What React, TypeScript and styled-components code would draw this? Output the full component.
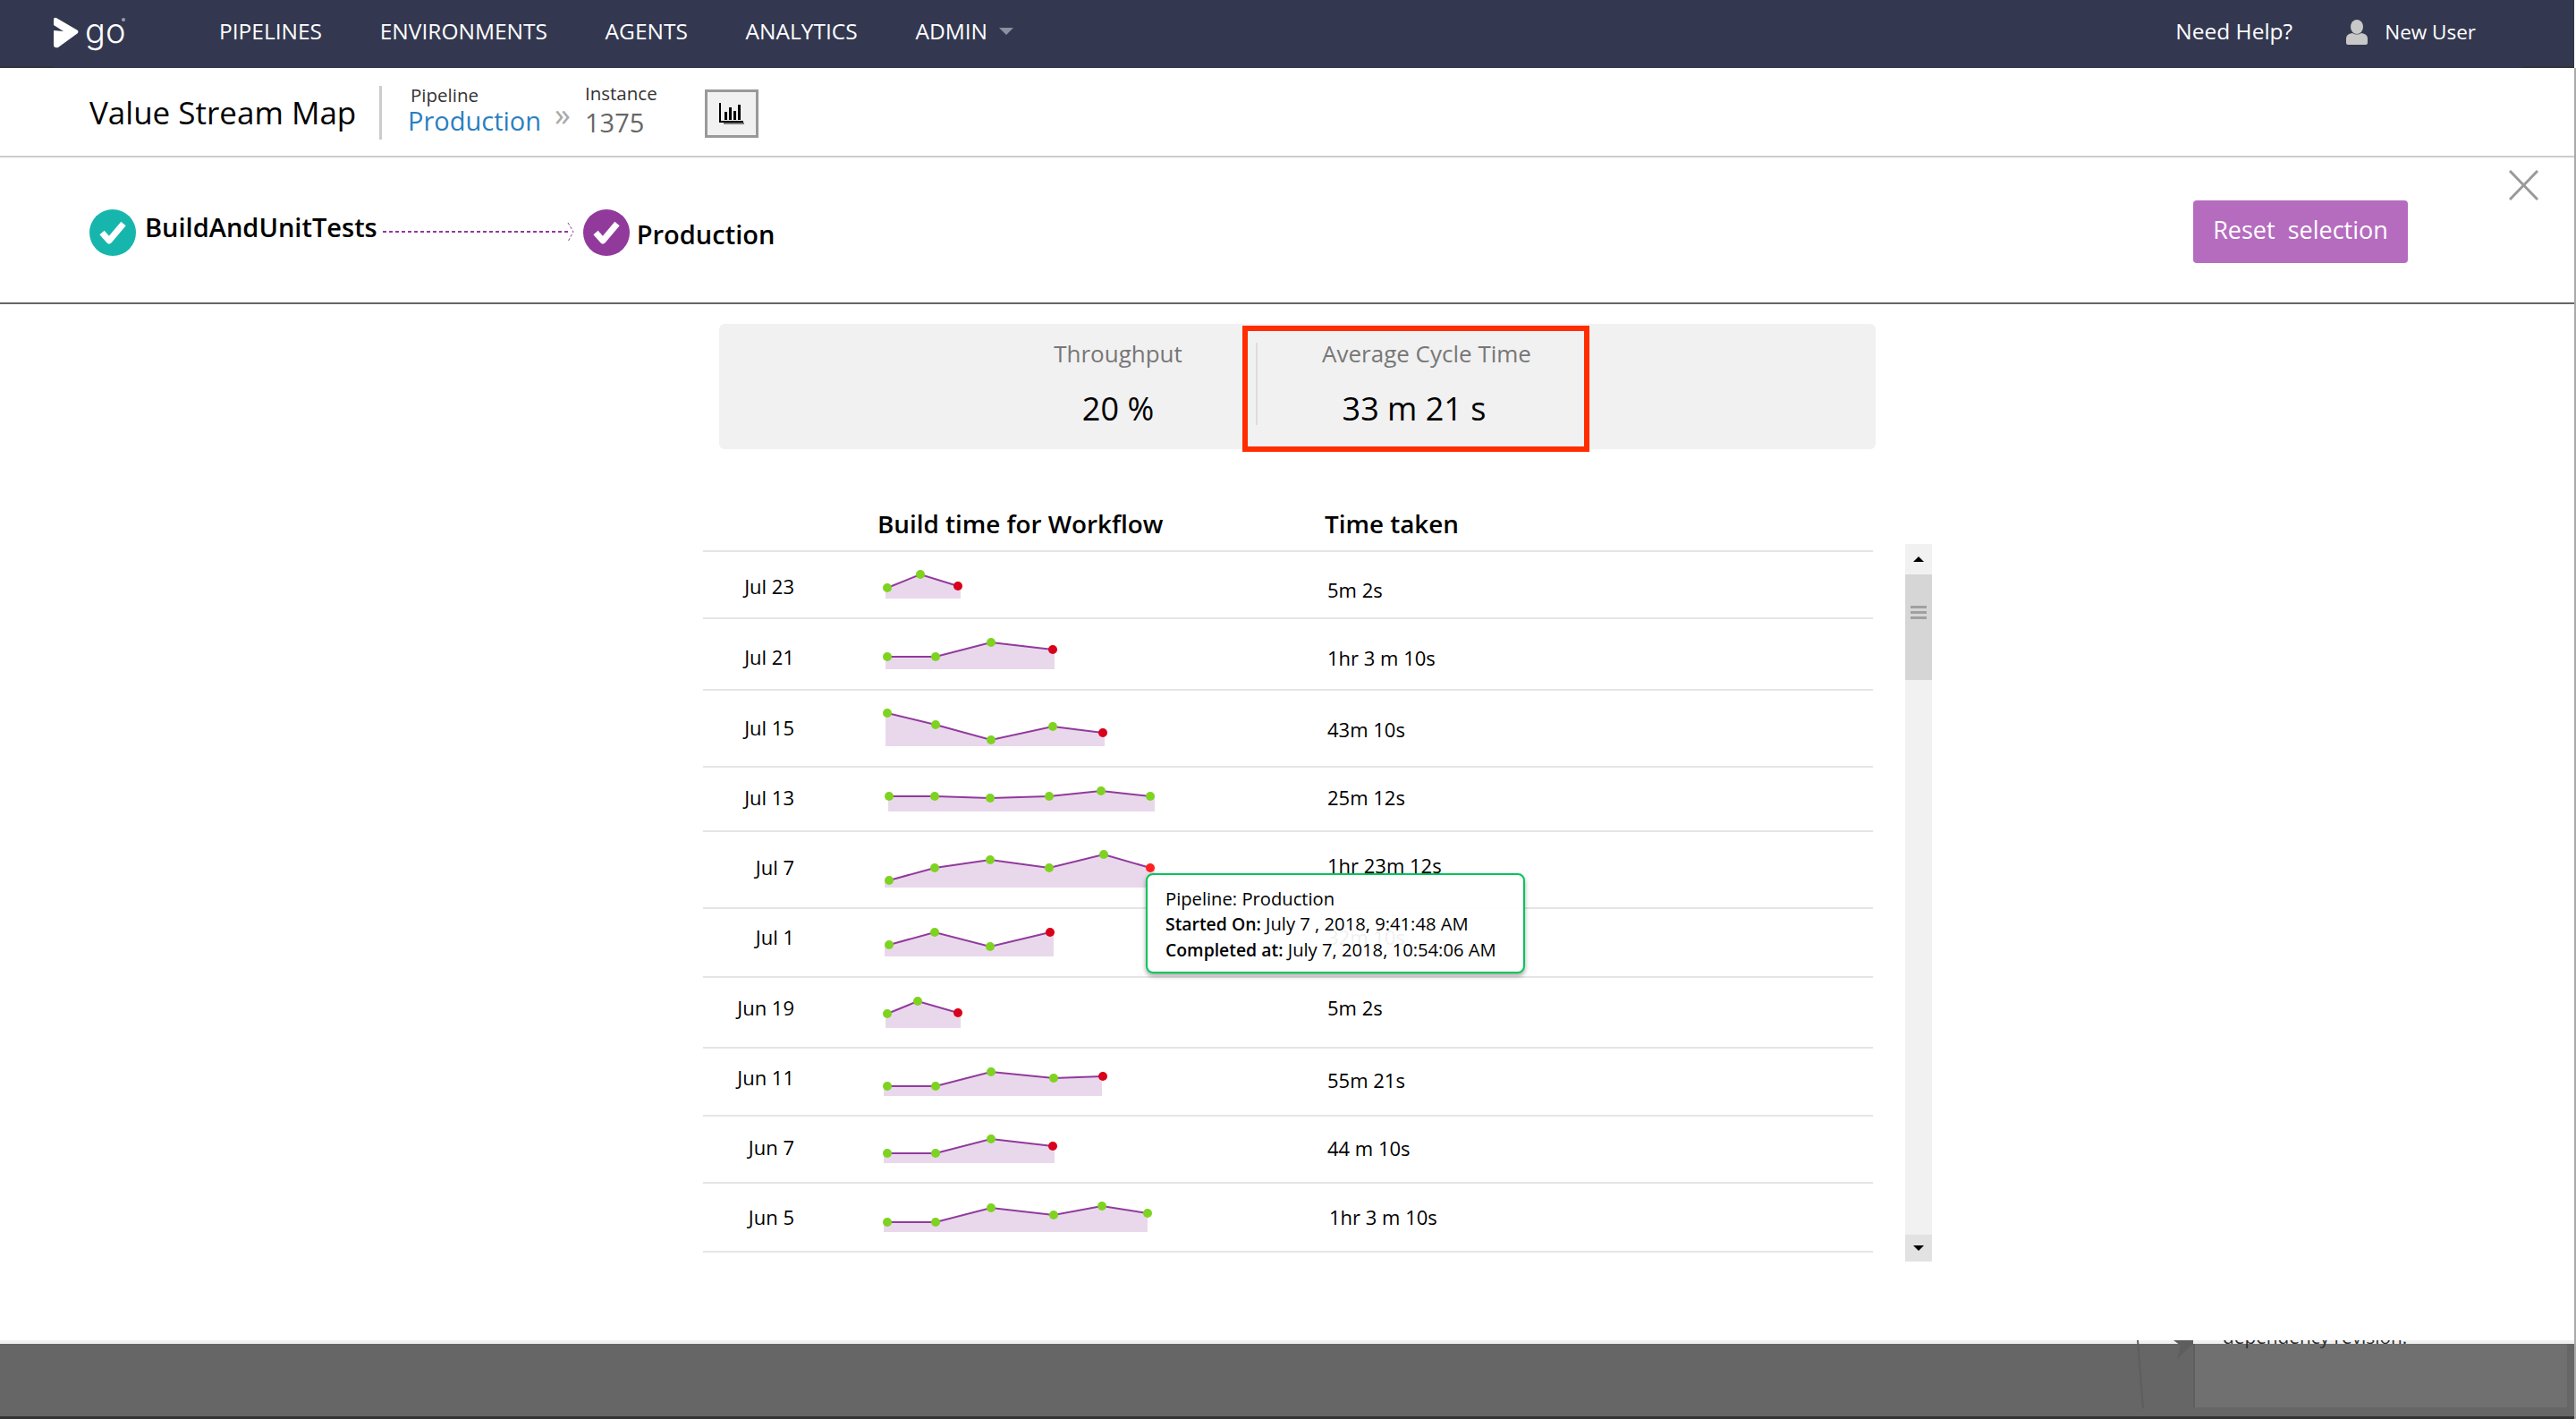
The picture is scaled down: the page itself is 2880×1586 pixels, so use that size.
import React from 'react';
import styled, { createGlobalStyle } from 'styled-components';

const GlobalStyle = createGlobalStyle`
  html, body { margin: 0; padding: 0; background: #fff; }
  body { font-family: "Open Sans", "Liberation Sans", sans-serif; color: #000; }
  * { box-sizing: border-box; }
`;

const Page = styled.div`
  position: relative;
  width: 2880px;
  height: 1586px;
  display: flex;
  flex-direction: column;
  overflow: hidden;
  &::after {
    content: '';
    position: absolute;
    top: 76px;
    right: 0;
    bottom: 0;
    width: 2px;
    background: #aaa;
  }
`;

const Header = styled.header`
  position: relative;
  height: 76px;
  width: 2878px;
  flex: none;
  background: #333850;
  display: flex;
  align-items: center;
  color: #fff;
  &::before,
  &::after {
    content: '';
    position: absolute;
    bottom: 0;
    height: 2px;
    background: #33343a;
  }
  &::before {
    left: 0;
    width: 60px;
  }
  &::after {
    right: 0;
    width: 58px;
  }
`;

const Logo = styled.div`
  position: relative;
  width: 245px;
  padding-left: 60px;
  display: flex;
  align-items: center;
  gap: 7px;
  height: 76px;
  margin-top: -4px;
  &::after {
    content: '';
    position: absolute;
    left: 136px;
    top: 22px;
    width: 4px;
    height: 4px;
    border-radius: 50%;
    background: #9a9db0;
  }
`;

const LogoText = styled.span`
  font-family: Inter, "Open Sans", sans-serif;
  font-size: 38px;
  font-weight: 300;
  line-height: 40px;
  margin-top: -4px;
`;

const Nav = styled.nav`
  display: flex;
  align-items: center;
  gap: 64.7px;
  margin-top: -6px;
`;

const NavLink = styled.a`
  font-size: 24.5px;
  line-height: 30px;
  display: flex;
  align-items: center;
  gap: 13px;
`;

const Caret = styled.span`
  width: 0;
  height: 0;
  border-left: 8px solid transparent;
  border-right: 8px solid transparent;
  border-top: 8px solid #8d90a0;
`;

const HeaderRight = styled.div`
  margin-left: auto;
  margin-right: 110px;
  display: flex;
  align-items: center;
  margin-top: -5px;
`;

const Help = styled.a`
  font-size: 24.5px;
  margin: -2px 60px 0 0;
`;

const UserName = styled.span`
  font-size: 22.5px;
  margin-left: 19px;
`;

const SubHeader = styled.div`
  height: 100px;
  flex: none;
  border-bottom: 2px solid #ccc;
  display: flex;
  align-items: flex-start;
  padding-left: 100px;
`;

const Title = styled.h1`
  margin: 20px 0 0;
  font-size: 35px;
  line-height: 44px;
  font-weight: 500;
  width: 327px;
  height: 60px;
  border-right: 3px solid #ccc;
  padding-top: 8px;
  white-space: nowrap;
`;

const Crumb = styled.div<{ $width: number; $left?: number }>`
  width: ${(p) => p.$width}px;
  padding-left: ${(p) => p.$left ?? 0}px;
  display: flex;
  flex-direction: column;
`;

const CrumbLabel = styled.span<{ $left?: number; $top: number }>`
  font-size: 20.5px;
  line-height: 26px;
  color: #333;
  margin-top: ${(p) => p.$top}px;
  margin-left: ${(p) => p.$left ?? 0}px;
`;

const CrumbValue = styled.span<{ $color: string; $top: number }>`
  font-size: 29px;
  line-height: 38px;
  color: ${(p) => p.$color};
  margin-top: ${(p) => p.$top}px;
`;

const Chevrons = styled.span`
  font-size: 36px;
  line-height: 38px;
  color: #aaa;
  width: 40px;
  margin-top: 33px;
  padding-left: 6px;
`;

const ChartButton = styled.button`
  width: 60px;
  height: 54px;
  margin: 24px 0 0 53px;
  background: #f1f1f1;
  border: 3px solid #999;
  padding: 0;
  display: flex;
  align-items: center;
  justify-content: center;
`;

const Band = styled.div`
  height: 164px;
  flex: none;
  border-bottom: 2px solid #666;
  display: flex;
  align-items: flex-start;
  padding: 14px 42px 0 100px;
`;

const StageIcon = styled.span<{ $color: string; $top: number }>`
  width: 52px;
  height: 52px;
  flex: none;
  border-radius: 50%;
  background: ${(p) => p.$color};
  margin-top: ${(p) => p.$top}px;
  display: flex;
  align-items: center;
  justify-content: center;
`;

const StageName = styled.span<{ $top: number; $left: number }>`
  font-size: 29px;
  line-height: 38px;
  font-weight: 600;
  margin-top: ${(p) => p.$top}px;
  margin-left: ${(p) => p.$left}px;
`;

const Link = styled.svg`
  flex: none;
  margin: 54px 10px 0 6px;
`;

const ResetButton = styled.button`
  width: 240px;
  height: 70px;
  margin: 34px 113px 0 auto;
  border: none;
  border-radius: 4px;
  background: #b56cbf;
  color: #fff;
  font-family: inherit;
  font-size: 27px;
  line-height: 36px;
  white-space: pre;
  padding: 0 0 4px;
`;

const Close = styled.svg`
  flex: none;
`;

const Main = styled.main`
  flex: 1;
  padding: 22px 0 0 786px;
  background: #fff;
`;

const Stats = styled.section`
  position: relative;
  margin-left: 18px;
  width: 1293px;
  height: 140px;
  background: #f1f1f1;
  border-radius: 6px;
  display: flex;
`;

const Stat = styled.div<{ $width: number; $bordered?: boolean }>`
  width: ${(p) => p.$width}px;
  height: 92px;
  margin-top: 21px;
  display: flex;
  flex-direction: column;
  align-items: center;
  ${(p) => p.$bordered && 'border-left: 2px solid #ddd;'}
`;

const StatLabel = styled.span`
  font-size: 26px;
  line-height: 30px;
  color: #777;
  margin-top: -3px;
`;

const StatValue = styled.span<{ $shift?: number }>`
  font-size: 36px;
  line-height: 44px;
  margin-top: 25px;
  margin-right: ${(p) => p.$shift ?? 0}px;
`;

const Highlight = styled.div`
  position: absolute;
  left: 585px;
  top: 2px;
  width: 388px;
  height: 141px;
  border: 6px solid #ff2d00;
`;

const TableWrap = styled.div`
  position: relative;
  display: flex;
  margin-top: 46px;
`;

const Table = styled.div`
  width: 1308px;
`;

const Row = styled.div<{ $height: number }>`
  height: ${(p) => p.$height}px;
  border-bottom: 2px solid #e5e5e5;
  display: grid;
  grid-template-columns: 102px 92px 504px 1fr;
  align-items: start;
`;

const HeadCell = styled.span<{ $col: number; $left: number }>`
  grid-column: ${(p) => p.$col};
  font-size: 27.8px;
  line-height: 36px;
  font-weight: 600;
  margin-top: 19px;
  margin-left: ${(p) => p.$left}px;
  white-space: nowrap;
`;

const DateCell = styled.span<{ $top: number }>`
  font-size: 22px;
  line-height: 28px;
  text-align: right;
  margin-top: ${(p) => p.$top}px;
`;

const TimeCell = styled.span<{ $top: number; $left?: number }>`
  grid-column: 4;
  font-size: 22px;
  line-height: 28px;
  margin-top: ${(p) => p.$top}px;
  margin-left: ${(p) => p.$left ?? 0}px;
`;

const Spark = styled.svg`
  display: block;
`;

const Scrollbar = styled.div`
  width: 30px;
  height: 802px;
  margin: 60px 0 0 36px;
  background: #f1f1f1;
  display: flex;
  flex-direction: column;
`;

const ScrollButton = styled.div<{ $bg: string; $flip?: boolean }>`
  height: ${(p) => (p.$flip ? 30 : 34)}px;
  flex: none;
  background: ${(p) => p.$bg};
  display: flex;
  align-items: center;
  justify-content: center;
  ${(p) => p.$flip && 'margin-top: auto;'}
  &::before {
    content: '';
    width: 0;
    height: 0;
    border-left: 6px solid transparent;
    border-right: 6px solid transparent;
    ${(p) => (p.$flip ? 'border-top: 6px solid #000;' : 'border-bottom: 6px solid #000;')}
  }
`;

const Thumb = styled.div`
  height: 118px;
  background: #d6d6d6;
  padding: 35px 6px 0 6px;
  display: flex;
  flex-direction: column;
  gap: 3px;
`;

const Grip = styled.span`
  height: 3px;
  background: #a0a0a0;
`;

const Tooltip = styled.div`
  position: absolute;
  left: 495px;
  top: 428px;
  width: 424px;
  height: 112px;
  padding: 12px 20px;
  background: rgba(255, 255, 255, 0.94);
  border: 2px solid #00c45a;
  border-radius: 8px;
  box-shadow: 0 3px 5px rgba(0, 0, 0, 0.35);
  font-size: 20.2px;
  line-height: 28px;
  white-space: nowrap;
`;

const TipKey = styled.span`
  font-size: 19.4px;
  font-weight: 600;
`;

const Footer = styled.footer`
  position: relative;
  height: 88px;
  flex: none;
  background: #666;
  overflow: hidden;
  display: flex;
  flex-direction: column;
`;

const FooterStrip = styled.div`
  height: 4px;
  flex: none;
  background: #f0f0f0;
`;

const FooterBody = styled.div`
  flex: 1;
  display: flex;
  justify-content: flex-end;
  padding-right: 10px;
  padding-bottom: 10px;
`;

const FooterPanel = styled.div`
  width: 418px;
  background: #707070;
  border-left: 2px solid #5e5e5e;
`;

const FooterEdge = styled.div`
  height: 3px;
  flex: none;
  background: #333;
`;

const ClippedText = styled.span`
  position: absolute;
  left: 2485px;
  top: -18px;
  font-size: 20.8px;
  line-height: 28px;
  color: #2d2d2d;
  white-space: nowrap;
`;

const FooterGhost = styled.svg`
  position: absolute;
  left: 2380px;
  top: 0;
`;

type Point = [number, number];

type Build = {
  date: string;
  time: string;
  top: number;
  bottom: number;
  dateY: number;
  timeY: number;
  timeLeft?: number;
  area: [number, number, number];
  points: Point[];
  endColor: string;
};

const PURPLE = '#913a9c';
const RED = '#d9001b';

const builds: Build[] = [
  { date: 'Jul 23', time: '5m 2s', top: 617, bottom: 692, dateY: 655, timeY: 659, area: [990, 1074, 669],
    points: [[992, 657], [1029, 642], [1071, 655]], endColor: RED },
  { date: 'Jul 21', time: '1hr 3 m 10s', top: 692, bottom: 772, dateY: 734, timeY: 735, area: [990, 1179, 748],
    points: [[992, 734], [1046, 734], [1108, 718], [1177, 726]], endColor: RED },
  { date: 'Jul 15', time: '43m 10s', top: 772, bottom: 858, dateY: 813, timeY: 815, area: [990, 1235, 834],
    points: [[992, 797], [1046, 810], [1108, 827], [1177, 812], [1233, 819]], endColor: RED },
  { date: 'Jul 13', time: '25m 12s', top: 858, bottom: 930, dateY: 891, timeY: 891, area: [993, 1291, 907],
    points: [[994, 890], [1045, 890], [1107, 892], [1173, 890], [1231, 884], [1286, 890]], endColor: '#7ed321' },
  { date: 'Jul 7', time: '1hr 23m 12s', top: 930, bottom: 1016, dateY: 969, timeY: 967, area: [989, 1291, 992],
    points: [[994, 984], [1045, 970], [1107, 961], [1173, 970], [1234, 955], [1286, 970]], endColor: '#ff2020' },
  { date: 'Jul 1', time: '32m 10s', top: 1016, bottom: 1093, dateY: 1047, timeY: 1047, area: [989, 1178, 1069],
    points: [[994, 1056], [1045, 1042], [1107, 1058], [1174, 1042]], endColor: RED },
  { date: 'Jun 19', time: '5m 2s', top: 1093, bottom: 1172, dateY: 1126, timeY: 1126, area: [990, 1074, 1149],
    points: [[992, 1133], [1026, 1119], [1071, 1132]], endColor: RED },
  { date: 'Jun 11', time: '55m 21s', top: 1172, bottom: 1248, dateY: 1204, timeY: 1207, area: [988, 1232, 1225],
    points: [[992, 1214], [1046, 1214], [1108, 1198], [1178, 1205], [1233, 1203]], endColor: RED },
  { date: 'Jun 7', time: '44 m 10s', top: 1248, bottom: 1323, dateY: 1282, timeY: 1283, area: [988, 1179, 1300],
    points: [[992, 1289], [1046, 1289], [1108, 1273], [1177, 1281]], endColor: RED },
  { date: 'Jun 5', time: '1hr 3 m 10s', top: 1323, bottom: 1400, dateY: 1360, timeY: 1360, timeLeft: 2, area: [988, 1283, 1377],
    points: [[992, 1366], [1046, 1366], [1108, 1350], [1178, 1358], [1232, 1348], [1283, 1356]], endColor: '#7ed321' },
];

function Sparkline({ build }: { build: Build }) {
  const { area, points, top, bottom, endColor } = build;
  const [left, right, base] = area;
  const line = points.map((p) => p.join(',')).join(' ');
  const first = points[0];
  const last = points[points.length - 1];
  const fill = `${left},${base} ${left},${first[1]} ${line} ${right},${last[1]} ${right},${base}`;
  return (
    <Spark width={320} height={bottom - top - 2} viewBox={`980 ${top} 320 ${bottom - top - 2}`}>
      <polygon points={fill} fill="#e9d8ec" />
      <polyline points={line} fill="none" stroke={PURPLE} strokeWidth={2} />
      {points.map((p, i) => (
        <circle key={i} cx={p[0]} cy={p[1]} r={5} fill={i === points.length - 1 ? endColor : '#7ed321'} />
      ))}
    </Spark>
  );
}

function Check() {
  return (
    <svg width="30" height="26" viewBox="0 0 30 26">
      <path d="M3 13 L11 22 L27 3" fill="none" stroke="#fff" strokeWidth="7" strokeLinejoin="round" />
    </svg>
  );
}

function App() {
  return (
    <Page>
      <GlobalStyle />
      <Header>
        <Logo>
          <svg width="28" height="35" viewBox="0 0 28 35">
            <path
              d="M3 1 L27 15 Q28 17 27 18 L5 34 Q0 35 0 31 V15 L11 16 L0 9 V3 Q0 0 3 1 Z"
              fill="#fff"
            />
          </svg>
          <LogoText>go</LogoText>
        </Logo>
        <Nav>
          <NavLink>PIPELINES</NavLink>
          <NavLink>ENVIRONMENTS</NavLink>
          <NavLink>AGENTS</NavLink>
          <NavLink>ANALYTICS</NavLink>
          <NavLink>
            ADMIN
            <Caret />
          </NavLink>
        </Nav>
        <HeaderRight>
          <Help>Need Help?</Help>
          <svg width="24" height="28" viewBox="0 0 24 28">
            <ellipse cx="12" cy="8" rx="7" ry="8" fill="#c8c8c8" />
            <path d="M0 21 Q0 16 7 15 Q12 18 17 15 Q24 16 24 21 V26 Q24 28 22 28 H2 Q0 28 0 26 Z" fill="#c8c8c8" />
          </svg>
          <UserName>New User</UserName>
        </HeaderRight>
      </Header>

      <SubHeader>
        <Title>Value Stream Map</Title>
        <Crumb $width={187} $left={29}>
          <CrumbLabel $top={17} $left={3}>Pipeline</CrumbLabel>
          <CrumbValue $top={-3} $color="#2a7fc0">Production</CrumbValue>
        </Crumb>
        <Chevrons>»</Chevrons>
        <Crumb $width={81}>
          <CrumbLabel $top={15}>Instance</CrumbLabel>
          <CrumbValue $top={1} $color="#666">1375</CrumbValue>
        </Crumb>
        <ChartButton>
          <svg width="28" height="24" viewBox="0 0 28 24">
            <path d="M1 0 V21 H27" fill="none" stroke="#000" strokeWidth="2" />
            <path d="M5 23 H28" stroke="#000" strokeWidth="1" />
            <rect x="6" y="10" width="3" height="9" fill="#000" />
            <rect x="11" y="5" width="3" height="14" fill="#000" />
            <rect x="16" y="9" width="3" height="10" fill="#000" />
            <rect x="21" y="2" width="3" height="17" fill="#000" />
          </svg>
        </ChartButton>
      </SubHeader>

      <Band>
        <StageIcon $color="#17b6ad" $top={44}><Check /></StageIcon>
        <StageName $top={45} $left={10}>BuildAndUnitTests</StageName>
        <Link width="214" height="30" viewBox="0 0 214 30">
          <line x1="0" y1="15" x2="208" y2="15" stroke={PURPLE} strokeWidth="2" strokeDasharray="4 3" />
          <path d="M207 5 L213 15 L207 26" fill="none" stroke={PURPLE} strokeWidth="1" strokeDasharray="3 2" />
        </Link>
        <StageIcon $color={PURPLE} $top={44}><Check /></StageIcon>
        <StageName $top={53} $left={8}>Production</StageName>
        <ResetButton>{'Reset  selection'}</ResetButton>
        <Close width="33" height="34" viewBox="0 0 33 34">
          <path d="M1 1 L32 33 M32 1 L1 33" stroke="#999" strokeWidth="3" />
        </Close>
      </Band>

      <Main>
        <Stats>
          <Stat $width={600}>
            <StatLabel style={{ marginLeft: 292 }}>Throughput</StatLabel>
            <StatValue style={{ marginLeft: 292 }}>20 %</StatValue>
          </Stat>
          <Stat $width={380} $bordered>
            <StatLabel>Average Cycle Time</StatLabel>
            <StatValue $shift={28}>33 m 21 s</StatValue>
          </Stat>
          <Highlight />
        </Stats>

        <TableWrap>
          <Table>
            <Row $height={69}>
              <HeadCell $col={3} $left={1}>Build time for Workflow</HeadCell>
              <HeadCell $col={4} $left={-3}>Time taken</HeadCell>
            </Row>
            {builds.map((b) => (
              <Row key={b.date} $height={b.bottom - b.top}>
                <DateCell $top={b.dateY - b.top - 14}>{b.date}</DateCell>
                <span />
                <Sparkline build={b} />
                <TimeCell $top={b.timeY - b.top - 14} $left={b.timeLeft}>{b.time}</TimeCell>
              </Row>
            ))}
          </Table>
          <Scrollbar>
            <ScrollButton $bg="#f1f1f1" />
            <Thumb>
              <Grip />
              <Grip />
              <Grip />
            </Thumb>
            <ScrollButton $bg="#e2e2e2" $flip />
          </Scrollbar>
          <Tooltip>
            <div>Pipeline: Production</div>
            <div><TipKey>Started On:</TipKey> July 7 , 2018, 9:41:48 AM</div>
            <div><TipKey>Completed at:</TipKey> July 7, 2018, 10:54:06 AM</div>
          </Tooltip>
        </TableWrap>
      </Main>

      <Footer>
        <FooterStrip />
        <FooterBody>
          <FooterPanel />
        </FooterBody>
        <FooterEdge />
        <FooterGhost width="72" height="76" viewBox="0 0 72 76">
          <path d="M10 0 L16 76" stroke="#5e5e5e" strokeWidth="2" fill="none" />
          <path d="M54 21 L58 6 L50 0 H72 V4 Z" fill="#5e5e5e" />
        </FooterGhost>
        <ClippedText>dependency revision.</ClippedText>
      </Footer>
    </Page>
  );
}

export default App;
